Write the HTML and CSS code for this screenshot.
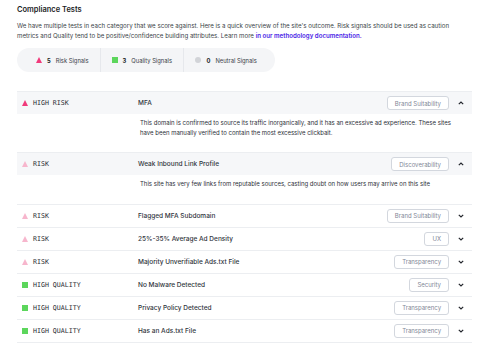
FILE: index.html
```html
<!DOCTYPE html>
<html lang="en">
<head>
    <meta charset="UTF-8">
    <meta name="viewport" content="width=device-width, initial-scale=1.0">
    <title>Compliance Tests</title>
    <link rel="stylesheet" href="styles.css">
</head>
<body>
    <div class="page">
        <h2>Compliance Tests</h2>
        <p class="intro">We have multiple tests in each category that we score against. Here is a quick overview of the site's outcome. Risk signals should be used as caution metrics and Quality tend to be positive/confidence building attributes. Learn more <a href="#">in our methodology documentation.</a></p>

        <div class="summary">
            <div class="summary-item">
                <span class="icon tri high"></span>
                <b>5</b>
                <span>Risk Signals</span>
            </div>
            <div class="summary-item">
                <span class="icon square"></span>
                <b>3</b>
                <span>Quality Signals</span>
            </div>
            <div class="summary-item">
                <span class="icon circle"></span>
                <b>0</b>
                <span>Neutral Signals</span>
            </div>
        </div>

        <div class="tests">
            <div class="test open">
                <div class="test-row">
                    <div class="level"><span class="icon tri high"></span>HIGH RISK</div>
                    <div class="name">MFA</div>
                    <span class="badge">Brand Suitability</span>
                    <span class="chev"><svg width="6" height="4" viewBox="0 0 6 4"><polyline points="0.8,3.2 3,1 5.2,3.2" fill="none" stroke="#23262d" stroke-width="1.2"/></svg></span>
                </div>
                <div class="detail">This domain is confirmed to source its traffic inorganically, and it has an excessive ad experience. These sites have been manually verified to contain the most excessive clickbait.</div>
            </div>
            <div class="test open">
                <div class="test-row">
                    <div class="level"><span class="icon tri"></span>RISK</div>
                    <div class="name">Weak Inbound Link Profile</div>
                    <span class="badge">Discoverability</span>
                    <span class="chev"><svg width="6" height="4" viewBox="0 0 6 4"><polyline points="0.8,3.2 3,1 5.2,3.2" fill="none" stroke="#23262d" stroke-width="1.2"/></svg></span>
                </div>
                <div class="detail">This site has very few links from reputable sources, casting doubt on how users may arrive on this site</div>
            </div>
            <div class="test">
                <div class="test-row">
                    <div class="level"><span class="icon tri"></span>RISK</div>
                    <div class="name">Flagged MFA Subdomain</div>
                    <span class="badge">Brand Suitability</span>
                    <span class="chev"><svg width="6" height="4" viewBox="0 0 6 4"><polyline points="0.8,0.8 3,3 5.2,0.8" fill="none" stroke="#23262d" stroke-width="1.2"/></svg></span>
                </div>
            </div>
            <div class="test">
                <div class="test-row">
                    <div class="level"><span class="icon tri"></span>RISK</div>
                    <div class="name">25%-35% Average Ad Density</div>
                    <span class="badge">UX</span>
                    <span class="chev"><svg width="6" height="4" viewBox="0 0 6 4"><polyline points="0.8,0.8 3,3 5.2,0.8" fill="none" stroke="#23262d" stroke-width="1.2"/></svg></span>
                </div>
            </div>
            <div class="test">
                <div class="test-row">
                    <div class="level"><span class="icon tri"></span>RISK</div>
                    <div class="name">Majority Unverifiable Ads.txt File</div>
                    <span class="badge">Transparency</span>
                    <span class="chev"><svg width="6" height="4" viewBox="0 0 6 4"><polyline points="0.8,0.8 3,3 5.2,0.8" fill="none" stroke="#23262d" stroke-width="1.2"/></svg></span>
                </div>
            </div>
            <div class="test">
                <div class="test-row">
                    <div class="level"><span class="icon square"></span>HIGH QUALITY</div>
                    <div class="name">No Malware Detected</div>
                    <span class="badge">Security</span>
                    <span class="chev"><svg width="6" height="4" viewBox="0 0 6 4"><polyline points="0.8,0.8 3,3 5.2,0.8" fill="none" stroke="#23262d" stroke-width="1.2"/></svg></span>
                </div>
            </div>
            <div class="test">
                <div class="test-row">
                    <div class="level"><span class="icon square"></span>HIGH QUALITY</div>
                    <div class="name">Privacy Policy Detected</div>
                    <span class="badge">Transparency</span>
                    <span class="chev"><svg width="6" height="4" viewBox="0 0 6 4"><polyline points="0.8,0.8 3,3 5.2,0.8" fill="none" stroke="#23262d" stroke-width="1.2"/></svg></span>
                </div>
            </div>
            <div class="test">
                <div class="test-row">
                    <div class="level"><span class="icon square"></span>HIGH QUALITY</div>
                    <div class="name">Has an Ads.txt File</div>
                    <span class="badge">Transparency</span>
                    <span class="chev"><svg width="6" height="4" viewBox="0 0 6 4"><polyline points="0.8,0.8 3,3 5.2,0.8" fill="none" stroke="#23262d" stroke-width="1.2"/></svg></span>
                </div>
            </div>
        </div>
    </div>
</body>
</html>
```

FILE: styles.css
```css
body {
    margin: 0;
    font-family: Inter, "Noto Sans", sans-serif;
    color: #2b2f37;
    background: #fff;
}
.page {
    padding: 5px 16px 0 17px;
}
h2 {
    margin: 0;
    font-size: 7.5px;
    line-height: 10px;
    font-weight: 600;
    color: #1b1e25;
}
.intro {
    margin: 6px 0 0;
    font-size: 6.15px;
    line-height: 9.5px;
    color: #3b3f48;
}
.intro a {
    color: #4b1ee6;
    font-weight: 600;
    text-decoration: none;
}
.summary {
    display: inline-flex;
    margin-top: 8px;
    height: 24px;
    padding: 0 7px;
    border-radius: 12px;
    background: #f4f5f7;
}
.summary-item {
    display: flex;
    align-items: center;
    gap: 5px;
    padding: 0 11px;
    font-size: 5.8px;
    color: #3a3e47;
    border-left: 1px solid #e6e8ec;
}
.summary-item:first-child {
    border-left: none;
    padding-left: 12px;
}
.summary-item b {
    font-weight: 700;
    color: #1b1e25;
}
.icon {
    display: inline-block;
    flex: none;
}
.tri {
    width: 0;
    height: 0;
    border-left: 3.5px solid transparent;
    border-right: 3.5px solid transparent;
    border-bottom: 6px solid #f7b6cd;
}
.tri.high {
    border-bottom-color: #f13a7b;
}
.square {
    width: 6px;
    height: 6px;
    background: #5cd65c;
}
.circle {
    width: 6.5px;
    height: 6.5px;
    border-radius: 50%;
    background: #d2d4d8;
}
.tests {
    margin-top: 19px;
    border-bottom: 1px solid #eceef1;
}
.test {
    border-top: 1px solid #eceef1;
}
.test-row {
    display: grid;
    grid-template-columns: 116px 1fr auto 23px;
    align-items: center;
    height: 22px;
    padding-left: 5px;
}
.test.open .test-row {
    background: #f6f7f9;
}
.level {
    display: flex;
    align-items: center;
    gap: 5px;
    font-family: "DejaVu Sans Mono", monospace;
    font-size: 6.6px;
    color: #2a2d33;
}
.name {
    font-size: 6.5px;
    font-weight: 500;
    color: #30343c;
}
.badge {
    height: 14px;
    box-sizing: border-box;
    padding: 0 7px;
    display: flex;
    align-items: center;
    border: 1px solid #d3d7de;
    border-radius: 3px;
    background: #fff;
    font-size: 6px;
    color: #7f8797;
}
.chev {
    display: flex;
    justify-content: center;
    align-items: center;
}
.detail {
    padding: 4px 8px 15px 123px;
    font-size: 6px;
    line-height: 9.5px;
    color: #2b2f37;
}
```
